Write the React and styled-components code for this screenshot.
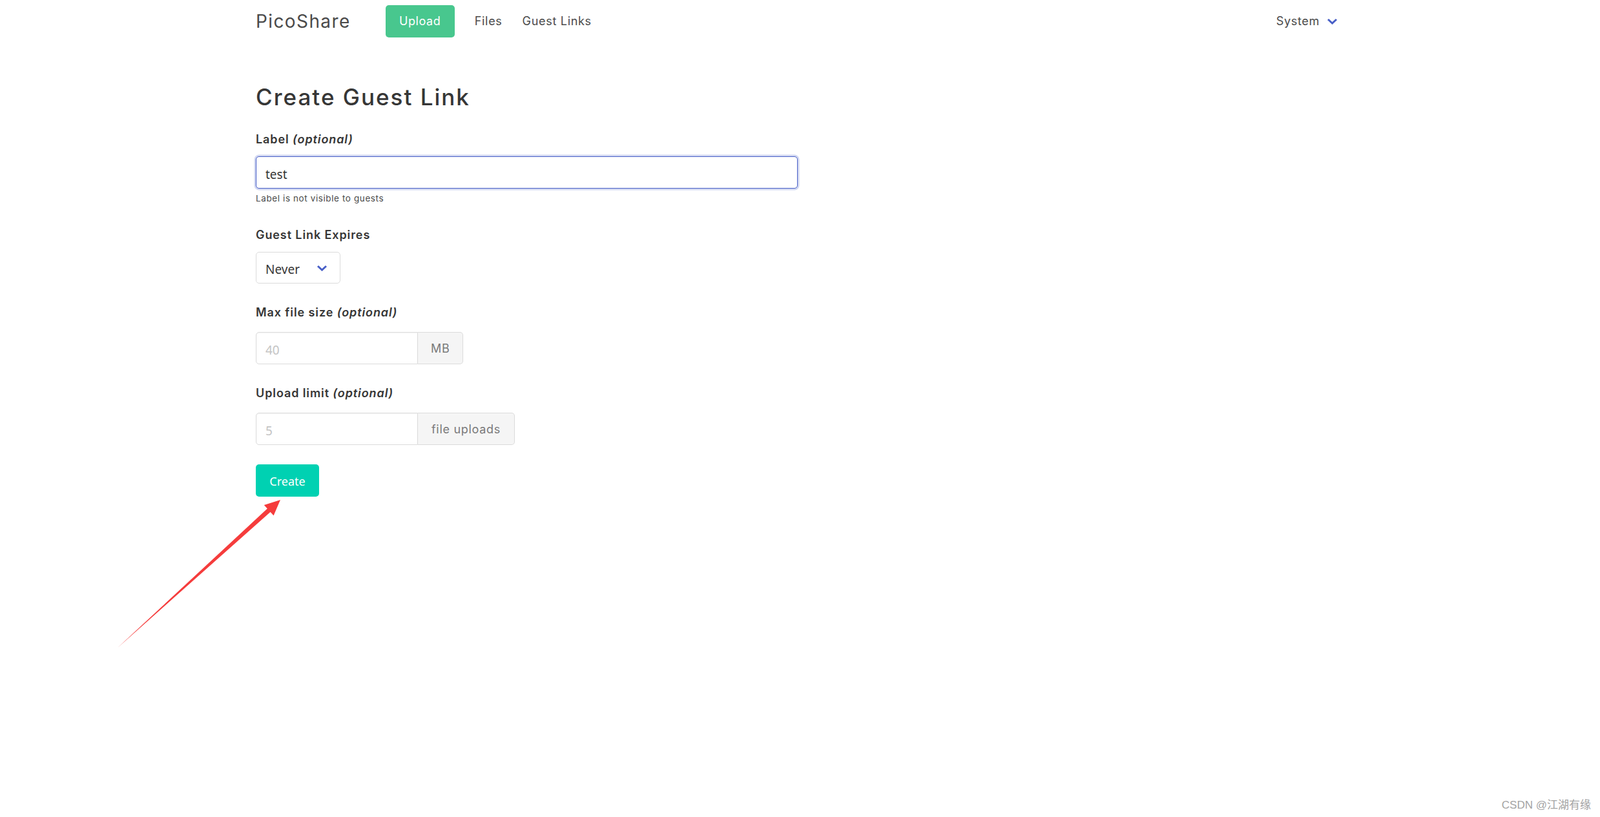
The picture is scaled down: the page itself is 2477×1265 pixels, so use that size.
import styled, { createGlobalStyle } from "styled-components";

const GlobalStyle = createGlobalStyle`
  html, body {
    margin: 0;
    padding: 0;
    background: #ffffff;
  }
  body {
    font-family: Inter, "Liberation Sans", sans-serif;
    color: #4a4a4a;
  }
  * {
    box-sizing: border-box;
  }
`;

const Page = styled.div`
  position: relative;
  width: 2477px;
  min-height: 1265px;
`;

const Navbar = styled.nav`
  height: 65px;
`;

const Container = styled.div`
  width: 1685px;
  margin: 0 auto;
`;

const NavInner = styled(Container)`
  height: 100%;
  display: flex;
  align-items: center;
`;

const Brand = styled.a`
  font-size: 28px;
  font-weight: 400;
  color: #4a4a4a;
  letter-spacing: 1.4px;
  margin-right: 54px;
`;

const UploadButton = styled.a`
  display: inline-flex;
  align-items: center;
  justify-content: center;
  width: 107px;
  height: 50px;
  border-radius: 5px;
  background: #48c78e;
  color: #ffffff;
  font-size: 18px;
  letter-spacing: 0.6px;
  margin-right: 31px;
`;

const NavLink = styled.a`
  font-size: 18px;
  letter-spacing: 0.7px;
  color: #4a4a4a;
  margin-right: 31px;
`;

const NavEnd = styled.div`
  margin-left: auto;
  display: flex;
  align-items: center;
  gap: 11px;
  padding-right: 10px;
  font-size: 18px;
  letter-spacing: 0.7px;
  color: #4a4a4a;
`;

const Main = styled(Container)`
  padding-top: 63px;
`;

const Title = styled.h1`
  margin: 0;
  font-size: 35px;
  line-height: 44px;
  font-weight: 500;
  letter-spacing: 2px;
  color: #363636;
`;

const Field = styled.div`
  margin-top: ${(p) => p.$top}px;
`;

const Label = styled.label`
  display: block;
  font-size: 18px;
  line-height: 24px;
  font-weight: 600;
  letter-spacing: 0.9px;
  color: #363636;
  margin-bottom: ${(p) => p.$gap}px;

  & em {
    font-style: italic;
  }
`;

const TextInput = styled.input`
  display: block;
  width: ${(p) => p.$width}px;
  height: 50px;
  padding: 5px 14px 0;
  font-family: "Noto Sans", "Open Sans", sans-serif;
  font-size: 19px;
  color: #363636;
  background: #ffffff;
  border: 1px solid ${(p) => (p.$focused ? "#485fc7" : "#dbdbdb")};
  border-radius: ${(p) => (p.$addon ? "5px 0 0 5px" : "5px")};
  box-shadow: ${(p) =>
    p.$focused
      ? "0 0 0 2.5px rgba(72, 95, 199, 0.25)"
      : "inset 0 1px 2px rgba(10, 10, 10, 0.05)"};
  outline: none;

  &::placeholder {
    color: #c4c4c4;
  }
`;

const Help = styled.p`
  margin: 6px 0 0;
  font-size: 13.5px;
  line-height: 18px;
  letter-spacing: 0.6px;
  color: #4a4a4a;
`;

const SelectWrap = styled.div`
  position: relative;
  width: 131px;
  height: 49px;
`;

const Select = styled.select`
  appearance: none;
  width: 100%;
  height: 100%;
  padding: 5px 40px 0 14px;
  font-family: "Noto Sans", "Open Sans", sans-serif;
  font-size: 19px;
  color: #363636;
  background: #ffffff;
  border: 1px solid #dbdbdb;
  border-radius: 5px;
  outline: none;
`;

const SelectArrow = styled.svg`
  position: absolute;
  right: 20px;
  top: 20px;
  pointer-events: none;
`;

const AddonGroup = styled.div`
  display: flex;
`;

const Addon = styled.span`
  display: inline-flex;
  align-items: center;
  justify-content: center;
  height: 50px;
  padding: 0 ${(p) => p.$pad}px;
  font-size: 18px;
  letter-spacing: 0.7px;
  color: #7a7a7a;
  background: #f5f5f5;
  border: 1px solid #dbdbdb;
  border-left: none;
  border-radius: 0 5px 5px 0;
`;

const CreateButton = styled.button`
  display: block;
  margin-top: 30px;
  width: 98px;
  height: 50px;
  padding-top: 3px;
  border: none;
  border-radius: 5px;
  background: #00d1b2;
  color: #ffffff;
  font-family: "Noto Sans", "Open Sans", sans-serif;
  font-size: 18px;
  cursor: pointer;
`;

const ArrowLayer = styled.svg`
  position: absolute;
  left: 0;
  top: 0;
  pointer-events: none;
`;

const Watermark = styled.div`
  position: absolute;
  right: 14px;
  bottom: 8px;
  font-family: "Liberation Sans", "Noto Sans CJK SC", sans-serif;
  font-size: 17px;
  color: #a3a3a3;
`;

function Chevron() {
  return (
    <svg width={17} height={10} viewBox="0 0 17 10">
      <polyline
        points="2,2 8.5,8 15,2"
        fill="none"
        stroke="#485fc7"
        strokeWidth="3"
      />
    </svg>
  );
}

export default function App() {
  return (
    <Page>
      <GlobalStyle />
      <Navbar>
        <NavInner>
          <Brand>PicoShare</Brand>
          <UploadButton>Upload</UploadButton>
          <NavLink>Files</NavLink>
          <NavLink>Guest Links</NavLink>
          <NavEnd>
            System
            <Chevron />
          </NavEnd>
        </NavInner>
      </Navbar>

      <Main>
        <Title>Create Guest Link</Title>

        <Field $top={32}>
          <Label $gap={14}>
            Label <em>(optional)</em>
          </Label>
          <TextInput $width={839} $focused defaultValue="test" />
          <Help>Label is not visible to guests</Help>
        </Field>

        <Field $top={36}>
          <Label $gap={14}>Guest Link Expires</Label>
          <SelectWrap>
            <Select defaultValue="never">
              <option value="never">Never</option>
            </Select>
            <SelectArrow width={17} height={10} viewBox="0 0 17 10">
              <polyline
                points="2,2 8.5,8 15,2"
                fill="none"
                stroke="#485fc7"
                strokeWidth="3"
              />
            </SelectArrow>
          </SelectWrap>
        </Field>

        <Field $top={33}>
          <Label $gap={18}>
            Max file size <em>(optional)</em>
          </Label>
          <AddonGroup>
            <TextInput $width={251} $addon placeholder="40" />
            <Addon $pad={20}>MB</Addon>
          </AddonGroup>
        </Field>

        <Field $top={33}>
          <Label $gap={18}>
            Upload limit <em>(optional)</em>
          </Label>
          <AddonGroup>
            <TextInput $width={251} $addon placeholder="5" />
            <Addon $pad={21}>file uploads</Addon>
          </AddonGroup>
        </Field>

        <CreateButton>Create</CreateButton>
      </Main>

      <ArrowLayer width={2477} height={1265}>
        <polygon
          points="182,1003 418.6,792.8 423.6,798.3 434,774 408.8,782.1 413.8,787.6"
          fill="#f53c3c"
        />
      </ArrowLayer>

      <Watermark>CSDN @江湖有缘</Watermark>
    </Page>
  );
}
